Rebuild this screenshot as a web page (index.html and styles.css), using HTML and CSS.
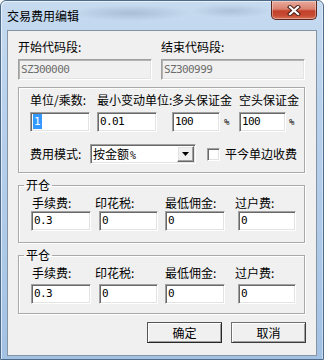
FILE: index.html
```html
<!DOCTYPE html>
<html lang="zh-CN">
<head>
<meta charset="utf-8">
<title>交易费用编辑</title>
<link rel="stylesheet" href="styles.css">
</head>
<body>
<div class="window">
  <div class="titlebar">
    <span class="title">交易费用编辑</span>
    <div class="close" aria-label="关闭">
      <svg width="14" height="11" viewBox="0 0 14 11"><path d="M3 2 L11 9 M11 2 L3 9" stroke="#4a2019" stroke-width="4.2" stroke-linecap="square" fill="none"/><path d="M3 2 L11 9 M11 2 L3 9" stroke="#ffffff" stroke-width="2.2" stroke-linecap="square" fill="none"/></svg>
    </div>
  </div>
  <div class="client">
    <div class="codes">
      <div class="field f-start">
        <div class="lbl">开始代码段:</div>
        <div class="edit tall disabled">SZ300000</div>
      </div>
      <div class="field f-end">
        <div class="lbl">结束代码段:</div>
        <div class="edit tall disabled">SZ300999</div>
      </div>
    </div>

    <div class="group g-main">
      <div class="cols">
        <div class="col c1">
          <div class="lbl">单位/乘数:</div>
          <div class="edit w60"><span class="sel">1</span></div>
        </div>
        <div class="col c2">
          <div class="lbl">最小变动单位:</div>
          <div class="edit w60">0.01</div>
        </div>
        <div class="col c3">
          <div class="lbl">多头保证金</div>
          <div class="pair"><div class="edit w48">100</div><span class="pct">%</span></div>
        </div>
        <div class="col c4">
          <div class="lbl">空头保证金</div>
          <div class="pair"><div class="edit w47">100</div><span class="pct pct2">%</span></div>
        </div>
      </div>
      <div class="moderow">
        <div class="modelbl">费用模式:</div>
        <div class="combo">
          <span class="combotext">按金额<span class="pctc">%</span></span>
          <span class="dropbtn"><svg width="7" height="4" viewBox="0 0 7 4"><polygon points="0,0 7,0 3.5,4" fill="#000"/></svg></span>
        </div>
        <span class="check"></span>
        <span class="checklbl">平今单边收费</span>
      </div>
    </div>

    <fieldset class="group g-open">
      <legend>开仓</legend>
      <div class="fees fees-open">
        <div class="col d1"><div class="lbl">手续费:</div><div class="edit w60">0.3</div></div>
        <div class="col d2"><div class="lbl">印花税:</div><div class="edit w59">0</div></div>
        <div class="col d3"><div class="lbl">最低佣金:</div><div class="edit w60">0</div></div>
        <div class="col d4"><div class="lbl">过户费:</div><div class="edit w58">0</div></div>
      </div>
    </fieldset>

    <fieldset class="group g-close">
      <legend>平仓</legend>
      <div class="fees fees-close">
        <div class="col d1"><div class="lbl">手续费:</div><div class="edit w60">0.3</div></div>
        <div class="col d2"><div class="lbl">印花税:</div><div class="edit w59">0</div></div>
        <div class="col d3"><div class="lbl">最低佣金:</div><div class="edit w60">0</div></div>
        <div class="col d4"><div class="lbl">过户费:</div><div class="edit w58">0</div></div>
      </div>
    </fieldset>

    <div class="buttons">
      <div class="btn default">确定</div>
      <div class="btn">取消</div>
    </div>
  </div>
</div>
</body>
</html>
```

FILE: styles.css
```css
* { box-sizing: border-box; }
html, body { margin: 0; padding: 0; }
body {
  width: 324px;
  height: 360px;
  overflow: hidden;
  background: #ffffff;
  font-family: "Noto Sans CJK SC", "Noto Sans", sans-serif;
  font-size: 12px;
  color: #000;
}

.window {
  width: 324px;
  height: 360px;
  display: flex;
  flex-direction: column;
  border: 1px solid #4f6b8a;
  border-radius: 6px 6px 0 0;
  background:
    radial-gradient(ellipse 60px 8px at 130px 12px, rgba(120,140,165,0.35), rgba(120,140,165,0) 100%),
    radial-gradient(ellipse 40px 7px at 230px 10px, rgba(120,140,165,0.3), rgba(120,140,165,0) 100%),
    linear-gradient(180deg, #c6dbf0 0%, #b8d1ec 30%, #adc9e8 70%, #a2c1e3 100%);
  box-shadow: inset 1px 1px 0 rgba(255,255,255,0.6), inset -1px 0 0 rgba(255,255,255,0.4);
}

.titlebar {
  height: 29px;
  flex: none;
  display: flex;
  justify-content: space-between;
  align-items: flex-start;
  padding-left: 6px;
}
.title {
  margin-top: 8px;
  line-height: 14px;
  font-size: 12px;
  color: #000;
}
.close {
  width: 46px;
  height: 19px;
  margin-right: 6px;
  border: 1px solid #5b2820;
  border-top: none;
  border-radius: 0 0 5px 5px;
  background: linear-gradient(180deg, #e8aa9c 0%, #da8270 45%, #c4412b 55%, #c64b32 80%, #d77258 100%);
  box-shadow: inset 0 0 0 1px rgba(255,255,255,0.35);
  display: flex;
  align-items: center;
  justify-content: center;
}

.client {
  flex: 1;
  margin: 0 6px 3px 6px;
  border: 1px solid #8594a4;
  background: #f0f0f0;
  padding: 9px 11px 0 10px;
  display: flex;
  flex-direction: column;
}

.lbl {
  line-height: 14px;
  white-space: nowrap;
}

/* code range row */
.codes { display: flex; gap: 9px; }
.f-start { width: 134px; }
.f-end { width: 144px; }
.codes .lbl { margin-bottom: 5px; }

/* edit boxes */
.edit {
  height: 20px;
  border: 1px solid;
  border-color: #a0a0a0 #ffffff #ffffff #a0a0a0;
  box-shadow: inset 1px 1px 0 #696969, inset -1px -1px 0 #e3e3e3;
  background: #ffffff;
  padding-left: 2px;
  font-family: "DejaVu Sans Mono", "Liberation Mono", monospace;
  font-size: 11px;
  letter-spacing: -0.6px;
  line-height: 18px;
  white-space: nowrap;
  overflow: hidden;
}
.edit.tall { height: 21px; line-height: 19px; width: 100%; }
.edit.disabled {
  background: #f0f0f0;
  color: #6d6d6d;
  box-shadow: inset 1px 1px 0 #b4b4b4, inset -1px -1px 0 #e3e3e3;
}
.w60 { width: 60px; }
.w59 { width: 59px; }
.w58 { width: 58px; }
.w48 { width: 48px; }
.w47 { width: 47px; }
.sel {
  display: inline-block;
  background: #3399ff;
  color: #fff;
  line-height: 15px;
  padding: 0 1px 0 1px;
  margin-top: 1px;
  vertical-align: top;
  letter-spacing: 0;
}

/* group boxes */
.group {
  border: 1px solid #a9a9a9;
  box-shadow: inset 1px 1px 0 #ffffff, 1px 1px 0 #ffffff;
  margin: 0;
  min-width: 0;
}
.g-main {
  margin-top: 7px;
  padding: 5px 0 8px 11px;
}
.cols { display: flex; }
.cols .lbl { margin-bottom: 5px; }
.c1 { width: 67px; }
.c2 { width: 75px; }
.c3 { width: 67px; }
.c4 { flex: 1; }
.pair { display: flex; align-items: center; }
.pct {
  margin-left: 4px;
  font-family: "DejaVu Sans Mono", monospace;
  font-size: 9px;
}
.pct2 { margin-left: 3px; }
.pctc {
  font-family: "DejaVu Sans Mono", monospace;
  font-size: 10px;
  margin-left: 1px;
}

.moderow {
  display: flex;
  align-items: center;
  margin-top: 12px;
  height: 20px;
}
.modelbl { width: 60px; line-height: 14px; white-space: nowrap; }
.combo {
  width: 106px;
  height: 20px;
  border: 1px solid;
  border-color: #a0a0a0 #ffffff #ffffff #a0a0a0;
  box-shadow: inset 1px 1px 0 #696969, inset -1px -1px 0 #e3e3e3;
  background: #fff;
  padding: 1px;
  display: flex;
}
.combotext {
  flex: 1;
  padding-left: 1px;
  line-height: 16px;
  white-space: nowrap;
}
.dropbtn {
  width: 17px;
  height: 16px;
  background: #f0f0f0;
  border: 1px solid;
  border-color: #ffffff #696969 #696969 #ffffff;
  box-shadow: inset -1px -1px 0 #a0a0a0, inset 1px 1px 0 #e3e3e3;
  display: flex;
  align-items: center;
  justify-content: center;
}
.check {
  width: 13px;
  height: 13px;
  margin-left: 11px;
  border: 1px solid;
  border-color: #a0a0a0 #ffffff #ffffff #a0a0a0;
  box-shadow: inset 1px 1px 0 #696969, inset -1px -1px 0 #e3e3e3;
  background: #fff;
}
.checklbl { margin-left: 5px; line-height: 14px; white-space: nowrap; }

/* fieldsets */
fieldset.group { padding: 0; }
legend {
  margin-left: 5px;
  padding: 0 2px;
  line-height: 14px;
  font-size: 12px;
}
.g-open { margin-top: 5px; }
.g-close { margin-top: 5px; }
.fees { display: flex; padding-left: 12px; }
.fees-open { padding-top: 4px; padding-bottom: 11px; }
.fees-open .lbl { margin-bottom: 1px; }
.fees-close { padding-top: 4px; padding-bottom: 9px; }
.fees-close .lbl { margin-bottom: 4px; }
.d1 { width: 68px; }
.d1 .lbl { padding-left: 1px; }
.d2 { width: 66px; }
.d2 .lbl { margin-left: -4px; }
.d3 { width: 73px; }
.d4 { flex: 1; }
.d4 .lbl { margin-left: -3px; }

/* buttons */
.buttons {
  display: flex;
  justify-content: flex-end;
  gap: 9px;
  margin-top: 8px;
  margin-right: -1px;
}
.btn {
  width: 75px;
  height: 21px;
  border: 1px solid;
  border-color: #707070 #3c3c3c #3c3c3c #707070;
  box-shadow: inset 1px 1px 0 #ffffff, inset -1px -1px 0 #a0a0a0;
  background: #f0f0f0;
  text-align: center;
  line-height: 19px;
}
.btn.default { border-color: #555555 #262626 #262626 #555555; }
```
